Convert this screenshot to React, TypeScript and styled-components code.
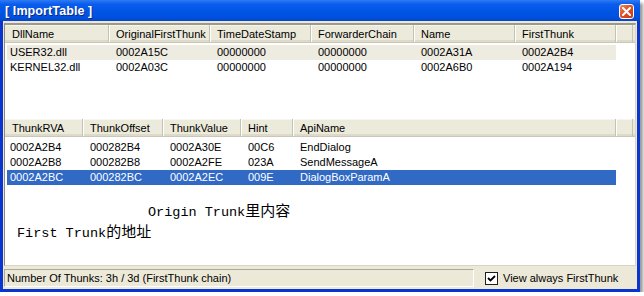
import React from "react";
import styled, { createGlobalStyle } from "styled-components";

const GlobalBody = createGlobalStyle`
  html, body {
    margin: 0;
    padding: 0;
    background: #ffffff;
  }
  body {
    font-family: "Liberation Sans", Arial, sans-serif;
    font-size: 11px;
    color: #000;
  }
`;

type Column = { title: string; width: number };

const topColumns: Column[] = [
  { title: "DllName", width: 104 },
  { title: "OriginalFirstThunk", width: 101 },
  { title: "TimeDateStamp", width: 101 },
  { title: "ForwarderChain", width: 103 },
  { title: "Name", width: 101 },
  { title: "FirstThunk", width: 101 },
];

const topRows = [
  ["USER32.dll", "0002A15C", "00000000", "00000000", "0002A31A", "0002A2B4"],
  ["KERNEL32.dll", "0002A03C", "00000000", "00000000", "0002A6B0", "0002A194"],
];

const thunkColumns: Column[] = [
  { title: "ThunkRVA", width: 78 },
  { title: "ThunkOffset", width: 80 },
  { title: "ThunkValue", width: 78 },
  { title: "Hint", width: 52 },
  { title: "ApiName", width: 323 },
];

const thunkRows = [
  ["0002A2B4", "000282B4", "0002A30E", "00C6", "EndDialog"],
  ["0002A2B8", "000282B8", "0002A2FE", "023A", "SendMessageA"],
  ["0002A2BC", "000282BC", "0002A2EC", "009E", "DialogBoxParamA"],
];

const App = () => {
  return (
    <>
      <GlobalBody />
      <Window>
        <TitleBar>
          <TitleText>[ ImportTable ]</TitleText>
          <CloseBtn>
            <svg width="9" height="9" viewBox="0 0 9 9">
              <path d="M1 1 L8 8 M8 1 L1 8" stroke="#fff" strokeWidth="2" strokeLinecap="square" />
            </svg>
          </CloseBtn>
        </TitleBar>
        <Client>
          <ListFrame>
            <ListView height={94}>
              <HeaderRow>
                {topColumns.map((c) => (
                  <HeaderCell key={c.title} w={c.width}>{c.title}</HeaderCell>
                ))}
                <HeaderFiller />
              </HeaderRow>
              <RowsBox top={2}>
                {topRows.map((r, i) => (
                  <Row key={r[0]} state={i === 0 ? "inactive" : "none"}>
                    {r.map((v, j) => (
                      <Cell key={j} w={j === 0 ? topColumns[j].width - 2 : topColumns[j].width} first={j === 0}>
                        {v}
                      </Cell>
                    ))}
                  </Row>
                ))}
              </RowsBox>
            </ListView>
            <ListView height={146}>
              <HeaderRow>
                {thunkColumns.map((c) => (
                  <HeaderCell key={c.title} w={c.width}>{c.title}</HeaderCell>
                ))}
                <HeaderFiller />
              </HeaderRow>
              <RowsBox top={3}>
                {thunkRows.map((r, i) => (
                  <Row key={r[0]} state={i === 2 ? "selected" : "none"}>
                    {r.map((v, j) => (
                      <Cell key={j} w={j === 0 ? thunkColumns[j].width - 2 : thunkColumns[j].width} first={j === 0}>
                        {v}
                      </Cell>
                    ))}
                  </Row>
                ))}
              </RowsBox>
              <Note indent={143} gap={14}>
                Origin Trunk<Cjk>里内容</Cjk>
              </Note>
              <Note indent={12} gap={0}>
                First Trunk<Cjk>的地址</Cjk>
              </Note>
            </ListView>
          </ListFrame>
          <StatusBar>
            <StatusPanel>Number Of Thunks: 3h / 3d (FirstThunk chain)</StatusPanel>
            <CheckLabel>
              <CheckBox>
                <svg width="9" height="9" viewBox="0 0 9 9">
                  <path d="M1 4 L3.5 6.5 L8 2" stroke="#000" strokeWidth="1.8" fill="none" />
                </svg>
              </CheckBox>
              View always FirstThunk
            </CheckLabel>
          </StatusBar>
        </Client>
      </Window>
    </>
  );
};

const Window = styled.div`
  width: 640px;
  height: 292px;
  box-sizing: border-box;
  display: flex;
  flex-direction: column;
  background: #0b3cd6;
  border-left: 3px solid #0a35cf;
  border-right: 3px solid #0a35cf;
  border-bottom: 3px solid #0a35cf;
  box-shadow: 3px 3px 3px rgba(0, 0, 0, 0.4);
`;

const TitleBar = styled.div`
  height: 21px;
  margin: 0 -3px;
  display: flex;
  align-items: center;
  justify-content: space-between;
  padding: 0 6px 0 5px;
  background: linear-gradient(#2f7bf5 0%, #0a5cec 20%, #0055e5 55%, #0050dc 85%, #0544c9 100%);
`;

const TitleText = styled.div`
  color: #ffffff;
  font-family: "Liberation Sans", Arial, sans-serif;
  font-weight: bold;
  font-size: 12.5px;
  letter-spacing: 0.1px;
  text-shadow: 1px 1px 0 #0a2a8a;
  margin-top: 1px;
`;

const CloseBtn = styled.div`
  width: 13px;
  height: 13px;
  border: 1px solid #ffffff;
  border-radius: 3px;
  background: linear-gradient(135deg, #ee8a62 0%, #e0502a 45%, #c8361a 100%);
  display: flex;
  align-items: center;
  justify-content: center;
  margin-top: 1px;
`;

const Client = styled.div`
  flex: 1;
  display: flex;
  flex-direction: column;
  background: #ece9d8;
`;

const ListFrame = styled.div`
  margin: 2px 1px 0 1px;
  border-top: 2px solid #9d9a8c;
  border-left: 1px solid #8d8a7e;
  border-right: 1px solid #d8d4c6;
  border-bottom: 1px solid #d8d4c6;
  background: #ffffff;
  display: flex;
  flex-direction: column;
`;

const ListView = styled.div<{ height: number }>`
  height: ${(p) => p.height}px;
  background: #ffffff;
  overflow: hidden;
`;

const HeaderRow = styled.div`
  display: flex;
  height: 18px;
  background: #ebeadb;
  box-sizing: border-box;
  border-bottom: 1px solid #cbc7b8;
  box-shadow: inset 0 -2px 0 #dedac9, inset 0 1px 0 #f6f5ee;
`;

const HeaderCell = styled.div<{ w: number }>`
  width: ${(p) => p.w}px;
  flex: none;
  box-sizing: border-box;
  padding: 1px 0 0 7px;
  line-height: 17px;
  border-right: 1px solid #c5c2b2;
  box-shadow: 1px 0 0 #ffffff;
  white-space: nowrap;
  overflow: hidden;
`;

const HeaderFiller = styled.div`
  flex: 1;
  margin-right: 2px;
  border-right: 1px solid #c5c2b2;
`;

const RowsBox = styled.div<{ top: number }>`
  padding-top: ${(p) => p.top}px;
  display: flex;
  flex-direction: column;
`;

const Row = styled.div<{ state: "none" | "inactive" | "selected" }>`
  display: flex;
  height: 15px;
  margin-left: 2px;
  width: max-content;
  background: ${(p) =>
    p.state === "selected" ? "#316ac5" : p.state === "inactive" ? "#eeebe1" : "transparent"};
  color: ${(p) => (p.state === "selected" ? "#ffffff" : "#000000")};
`;

const Cell = styled.div<{ w: number; first: boolean }>`
  width: ${(p) => p.w}px;
  flex: none;
  box-sizing: border-box;
  padding-left: ${(p) => (p.first ? 3 : 7)}px;
  line-height: 15px;
  white-space: nowrap;
`;

const Note = styled.div<{ indent: number; gap: number }>`
  margin-top: ${(p) => p.gap}px;
  padding-left: ${(p) => p.indent}px;
  font-family: "Liberation Mono", "Courier New", monospace;
  font-size: 13.5px;
  line-height: 21px;
  height: 21px;
  white-space: nowrap;
`;

const Cjk = styled.span`
  font-family: "Noto Sans CJK SC", sans-serif;
  font-size: 15px;
`;

const StatusBar = styled.div`
  flex: 1;
  display: flex;
  align-items: center;
  padding: 1px 0 0 1px;
`;

const StatusPanel = styled.div`
  width: 470px;
  height: 18px;
  box-sizing: border-box;
  border-top: 1px solid #aca899;
  border-left: 1px solid #aca899;
  border-bottom: 1px solid #ffffff;
  border-right: 1px solid #ffffff;
  padding-left: 2px;
  line-height: 16px;
  white-space: nowrap;
`;

const CheckLabel = styled.div`
  display: flex;
  align-items: center;
  margin-left: 11px;
  gap: 5px;
  white-space: nowrap;
`;

const CheckBox = styled.div`
  width: 13px;
  height: 13px;
  box-sizing: border-box;
  border: 1px solid #1c1c1c;
  background: #ffffff;
  display: flex;
  align-items: center;
  justify-content: center;
`;

export default App;
